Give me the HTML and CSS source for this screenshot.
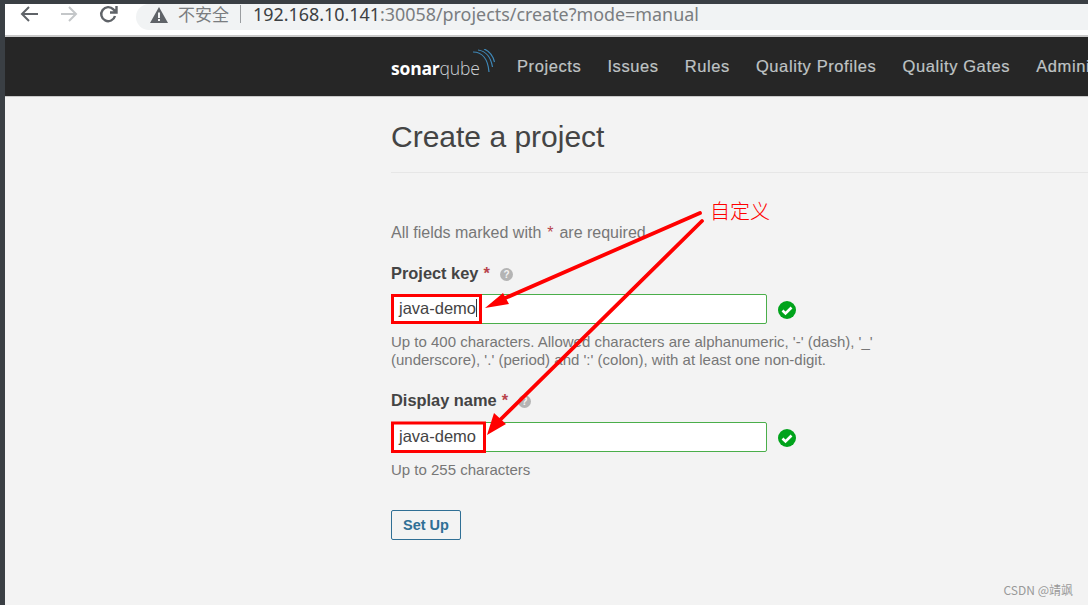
FILE: index.html
```html
<!DOCTYPE html>
<html lang="en">
<head>
<meta charset="utf-8">
<title>Create a project</title>
<link rel="stylesheet" href="styles.css">
</head>
<body>
<div class="shot">
  <header class="toolbar">
    <svg class="tb-icon" width="20" height="20" viewBox="0 0 20 20"><path d="M19 10H3M10 3l-7 7 7 7" fill="none" stroke="#5f6368" stroke-width="2"/></svg>
    <svg class="tb-icon fwd" width="20" height="20" viewBox="0 0 20 20"><path d="M2 10h15M10 3l7 7-7 7" fill="none" stroke="#c4c7c9" stroke-width="2"/></svg>
    <svg class="tb-icon reload" width="20" height="20" viewBox="0 0 20 20"><path d="M16 12a7 7 0 1 1-1.600-6.600L17 8M17.500 2v6.500H11" fill="none" stroke="#5f6368" stroke-width="2.400"/></svg>
    <div class="omnibox">
      <svg class="warn" width="18" height="16" viewBox="0 0 18 16"><path d="M9 0l9 16H0z" fill="#5f6368"/><path d="M8 5.500h2V11H8zM8 12h2v2H8z" fill="#f1f3f4"/></svg>
      <span class="insecure">不安全</span>
      <span class="sep"></span>
      <span class="url"><span class="host">192.168.10.141</span>:30058/projects/create?mode=manual</span>
    </div>
  </header>
  <nav class="navbar">
    <div class="logo">
      <span class="logo-text"><b>sonar</b>qube</span>
      <svg class="logo-waves" width="24" height="26" viewBox="0 0 24 26"><path d="M1 3c9 0 15 7 16 20M6 1c8 1 13 8 14.500 17M12 0c5 2 9 7 10.500 13" fill="none" stroke="#3f88b8" stroke-width="1.200"/></svg>
    </div>
    <a class="nav-link">Projects</a>
    <a class="nav-link">Issues</a>
    <a class="nav-link">Rules</a>
    <a class="nav-link">Quality Profiles</a>
    <a class="nav-link">Quality Gates</a>
    <a class="nav-link">Admini</a>
  </nav>
  <main class="content">
    <h1 class="title">Create a project</h1>
    <p class="required">All fields marked with <span class="star">*</span> are required</p>
    <div class="field">
      <label class="label">Project key <span class="star">*</span> <svg class="help" width="13" height="13" viewBox="0 0 13 13"><circle cx="6.500" cy="6.500" r="6.500" fill="#b4b4b4"/><text x="6.500" y="10" class="help-q">?</text></svg></label>
      <div class="input-row">
        <div class="input">java-demo<span class="caret"></span></div>
        <svg class="ok" width="18" height="18" viewBox="0 0 18 18"><circle cx="9" cy="9" r="9" fill="#00a31b"/><path d="M4.500 9.500l3 3 6-6" fill="none" stroke="#fff" stroke-width="2.600"/></svg>
      </div>
      <p class="hint">Up to 400 characters. Allowed characters are alphanumeric, '-' (dash), '_' (underscore), '.' (period) and ':' (colon), with at least one non-digit.</p>
    </div>
    <div class="field second">
      <label class="label">Display name <span class="star">*</span> <svg class="help" width="13" height="13" viewBox="0 0 13 13"><circle cx="6.500" cy="6.500" r="6.500" fill="#b4b4b4"/><text x="6.500" y="10" class="help-q">?</text></svg></label>
      <div class="input-row">
        <div class="input">java-demo</div>
        <svg class="ok" width="18" height="18" viewBox="0 0 18 18"><circle cx="9" cy="9" r="9" fill="#00a31b"/><path d="M4.500 9.500l3 3 6-6" fill="none" stroke="#fff" stroke-width="2.600"/></svg>
      </div>
      <p class="hint">Up to 255 characters</p>
    </div>
    <button class="setup">Set Up</button>
  </main>
  <svg class="annot" width="1088" height="605" viewBox="0 0 1088 605">
    <rect x="392.500" y="295.500" width="88" height="27" fill="none" stroke="#f00" stroke-width="3"/>
    <rect x="392.500" y="423" width="92" height="28.500" fill="none" stroke="#f00" stroke-width="3"/>
    <path d="M700 213L503 299M702 221L498 422" fill="none" stroke="#f00" stroke-width="3.800" stroke-linecap="round"/>
    <path d="M485 308L503 293 509 304zM487 435L494 413 506 424z" fill="#f00"/>
  </svg>
  <span class="note">自定义</span>
  <span class="credit">CSDN @靖飒</span>
</div>
</body>
</html>
```
FILE: styles.css
```css
* { box-sizing: border-box; }
html, body { margin: 0; height: 100%; overflow: hidden; }
body { font-family: "Liberation Sans", Arial, sans-serif; background: #f3f3f3; }
.shot {
  position: relative;
  width: 1088px;
  height: 605px;
  padding: 4px 0 0 5px;
  background: #3a3f44;
  display: flex;
  flex-direction: column;
  overflow: hidden;
}
.toolbar {
  flex: 0 0 33px;
  display: flex;
  align-items: flex-start;
  background: #fff;
  border-bottom: 2px solid #c9c9c9;
  padding-left: 14px;
}
.tb-icon { flex: none; }
.fwd { margin-left: 20px; }
.reload { margin-left: 20px; }
.omnibox {
  flex: 1;
  height: 26px;
  margin-left: 17px;
  padding: 0 0 7px 14px;
  background: #f1f3f4;
  border-radius: 13px 0 0 13px;
  display: flex;
  align-items: center;
  white-space: nowrap;
}
.warn { flex: none; margin-top: 2px; }
.insecure {
  margin-left: 10px;
  font: 17px "Noto Sans CJK SC", sans-serif;
  color: #7a7d80;
}
.sep { width: 1px; height: 18px; background: #9a9da0; margin: 0 12px 0 11px; }
.url { font: 17.900px "Noto Sans", sans-serif; color: #7a7d80; }
.host { color: #3c4043; }
.navbar {
  flex: 0 0 60px;
  display: flex;
  align-items: center;
  gap: 26px;
  padding-left: 386px;
  background: #262626;
  border-bottom: 1px solid #c8c8c8;
  white-space: nowrap;
}
.logo { flex: none; display: flex; align-items: flex-start; width: 100px; }
.logo-text { flex: none; font-size: 17.500px; font-weight: 300; color: #cfd3d6; letter-spacing: -.2px; margin-top: 2px; font-family: "Open Sans", sans-serif; }
.logo-text b { color: #fff; font-weight: 700; }
.logo-waves { flex: none; margin-left: -8px; margin-top: -5px; }
.nav-link { flex: none; font-size: 16.500px; letter-spacing: .6px; color: #bfc3c4; -webkit-text-stroke: .2px #bfc3c4; }
.content {
  flex: 1;
  background: #f3f3f3;
  padding-left: 386px;
}
.title {
  margin: 0 0 50px;
  height: 76px;
  padding-top: 24px;
  border-bottom: 1px solid #e6e6e6;
  font-size: 30px;
  font-weight: 400;
  line-height: 32px;
  color: #444;
}
.required { margin: 0 0 20px; font-size: 16px; line-height: 20px; color: #777; }
.required .star { margin: 0 1.500px; }
.star { color: #b8434b; }
.field { width: 490px; }
.second { margin-top: 21px; }
.label { display: flex; gap: 5px; align-items: center; font-size: 16.400px; font-weight: 700; line-height: 20px; color: #444; margin-bottom: 11px; }
.second .label { margin-bottom: 12px; }
.help { margin-left: 5px; margin-top: 2px; }
.help-q { font-size: 10px; font-weight: 700; fill: #f3f3f3; text-anchor: middle; }
.input-row { display: flex; align-items: center; gap: 11px; }
.input {
  width: 376px;
  height: 30px;
  padding: 0 7px 2px;
  display: flex;
  align-items: center;
  background: #fff;
  border: 1px solid #4aae4a;
  border-radius: 2px;
  font-size: 16.500px;
  color: #444;
}
.caret { width: 1px; height: 18px; background: #333; }
.ok { margin-top: 2px; }
.hint { margin: 9px 0 0; font-size: 15px; line-height: 18px; color: #777; }
.setup {
  display: block;
  margin-top: 31px;
  width: 70px;
  height: 30px;
  padding: 0;
  background: #f3f3f3;
  border: 1px solid #2f6f95;
  border-radius: 2px;
  font: 700 14.500px "Liberation Sans", Arial, sans-serif;
  color: #2f6f95;
}
.annot { position: absolute; left: 0; top: 0; pointer-events: none; }
.note { position: absolute; left: 710px; top: 200px; font: 300 20px/22px "Noto Sans CJK SC", sans-serif; color: #f00; }
.credit { position: absolute; right: 15px; top: 582px; font: 12px/16px "Noto Sans CJK SC", sans-serif; color: #999; }
```
